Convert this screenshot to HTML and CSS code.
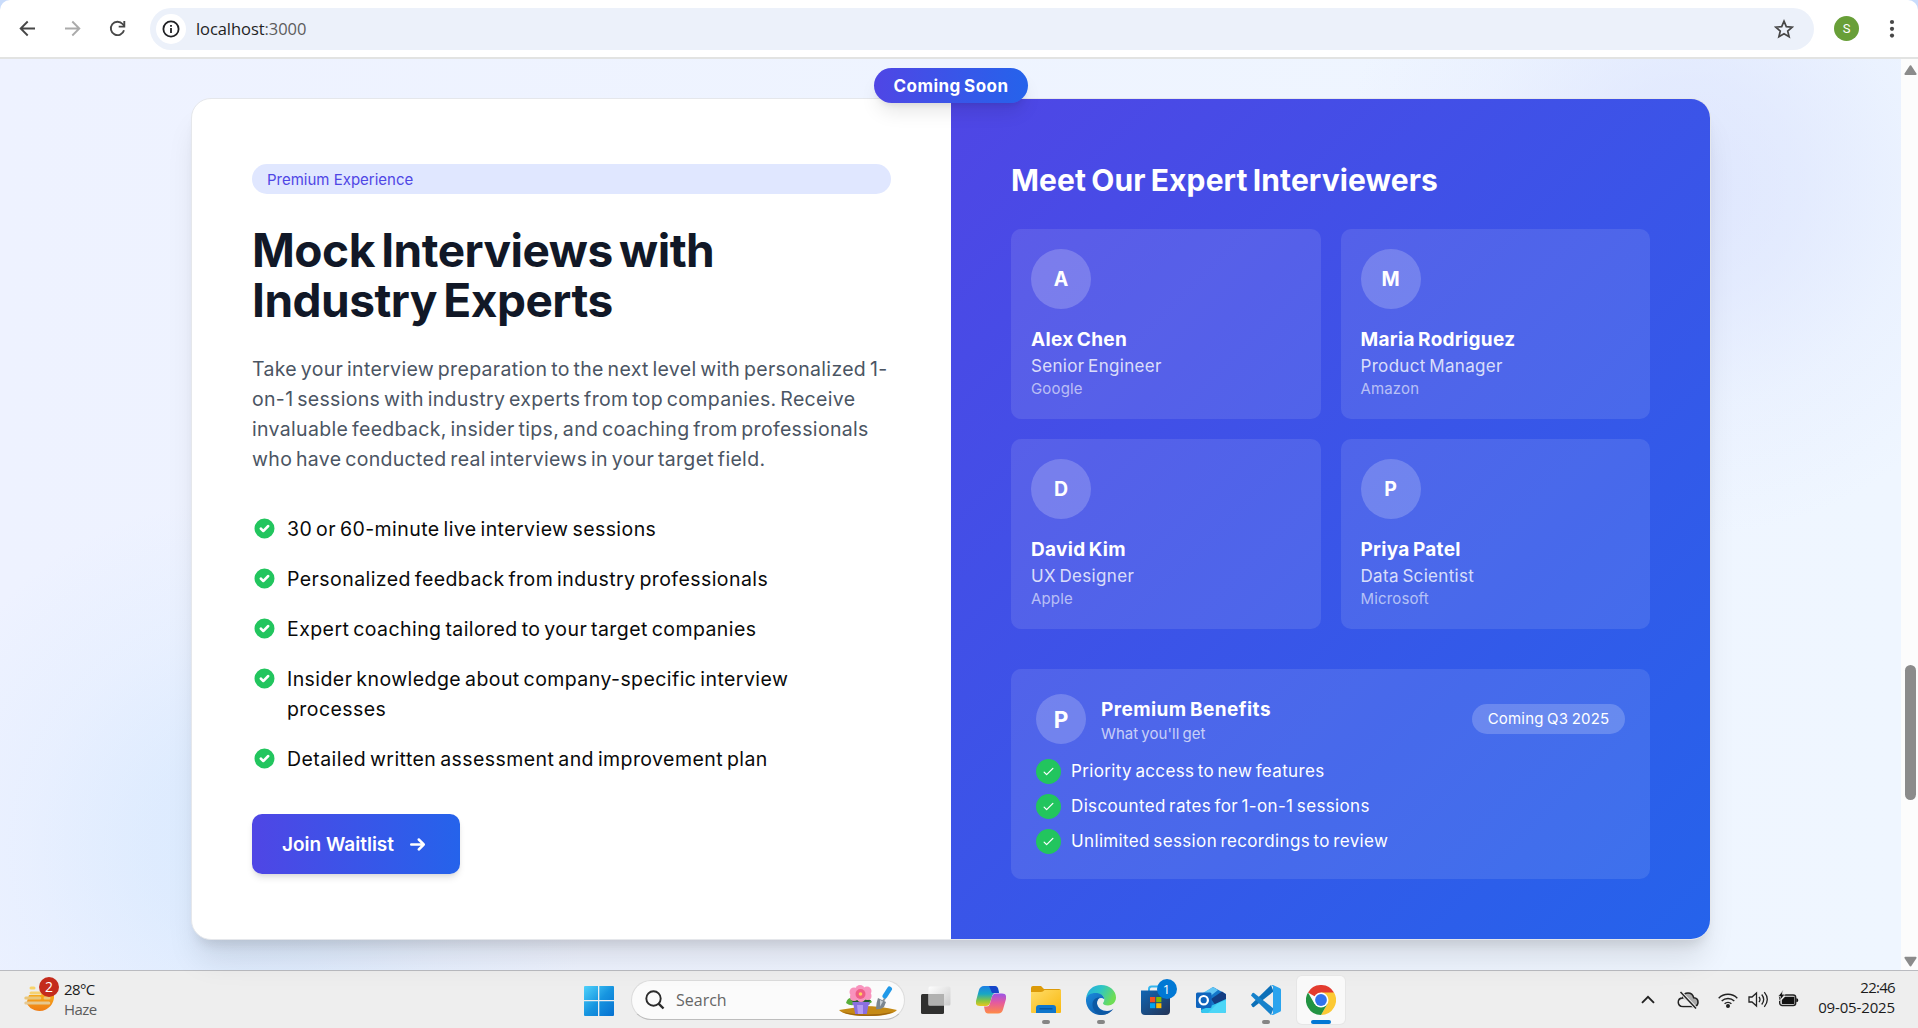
FILE: index.html
```html
<!DOCTYPE html>
<html lang="en">
<head>
<meta charset="utf-8">
<title>Mock Interviews with Industry Experts</title>
<link rel="stylesheet" href="styles.css">
</head>
<body>
<svg class="defs" aria-hidden="true">
  <defs>
    <symbol id="check-solid" viewBox="0 0 20 20"><path fill-rule="evenodd" d="M10 18a8 8 0 100-16 8 8 0 000 16zm3.707-9.293a1 1 0 00-1.414-1.414L9 10.586 7.707 9.293a1 1 0 00-1.414 1.414l2 2a1 1 0 001.414 0l4-4z" clip-rule="evenodd"/></symbol>
    <symbol id="check" viewBox="0 0 24 24"><path d="M5 13l4 4L19 7" fill="none" stroke="currentColor" stroke-width="2" stroke-linecap="round" stroke-linejoin="round"/></symbol>
  </defs>
</svg>

<header class="toolbar">
  <div class="nav">
    <svg width="17" height="17" viewBox="0 0 17 17" fill="none" stroke="#474747" stroke-width="1.9"><path d="M16 8.5H2M8.7 1.5l-7 7 7 7"/></svg>
    <svg width="17" height="17" viewBox="0 0 17 17" fill="none" stroke="#ababab" stroke-width="1.9"><path d="M1 8.5h14M8.3 1.5l7 7-7 7"/></svg>
    <svg width="17" height="17" viewBox="0 0 17 17" fill="none" stroke="#474747" stroke-width="1.9"><path d="M15 10.2A6.7 6.7 0 1 1 13.6 4l1.6 1.8"/><path d="M15.3 1v5.6H9.7"/></svg>
  </div>
  <div class="omnibox">
    <span class="site-info"><svg width="18" height="18" viewBox="0 0 18 18" fill="none" stroke="#202124" stroke-width="1.8"><circle cx="9" cy="9" r="7.6"/><path d="M9 8v5M9 4.9v1.9"/></svg></span>
    <span class="url">localhost<span class="port">:3000</span></span>
    <svg class="star" width="20" height="20" viewBox="0 0 20 20" fill="none" stroke="#474747" stroke-width="1.7"><path d="M10 2.2l2.3 5.4 5.9.5-4.5 3.9 1.4 5.7-5.1-3-5.1 3 1.4-5.7L1.8 8.1l5.9-.5z"/></svg>
  </div>
  <span class="profile">S</span>
  <svg class="dots" width="6" height="20" viewBox="0 0 6 20" fill="#474747"><circle cx="3" cy="3" r="2.1"/><circle cx="3" cy="9.8" r="2.1"/><circle cx="3" cy="16.6" r="2.1"/></svg>
</header>

<div class="viewport">
  <main class="page">
    <div class="card">
      <span class="soon">Coming Soon</span>
      <section class="pitch">
        <span class="tag">Premium Experience</span>
        <h1>Mock Interviews with<br>Industry Experts</h1>
        <p class="lead">Take your interview preparation to the next level with personalized 1-<br>on-1 sessions with industry experts from top companies. Receive<br>invaluable feedback, insider tips, and coaching from professionals<br>who have conducted real interviews in your target field.</p>
        <ul class="features">
          <li><svg><use href="#check-solid"/></svg><span>30 or 60-minute live interview sessions</span></li>
          <li><svg><use href="#check-solid"/></svg><span>Personalized feedback from industry professionals</span></li>
          <li><svg><use href="#check-solid"/></svg><span>Expert coaching tailored to your target companies</span></li>
          <li><svg><use href="#check-solid"/></svg><span>Insider knowledge about company-specific interview<br>processes</span></li>
          <li><svg><use href="#check-solid"/></svg><span>Detailed written assessment and improvement plan</span></li>
        </ul>
        <a class="button">Join Waitlist <svg viewBox="0 0 20 20"><path fill="currentColor" d="M10.293 5.293a1 1 0 011.414 0l4 4a1 1 0 010 1.414l-4 4a1 1 0 01-1.414-1.414L12.586 11H5a1 1 0 110-2h7.586l-2.293-2.293a1 1 0 010-1.414z"/></svg></a>
      </section>
      <section class="experts">
        <h2>Meet Our Expert Interviewers</h2>
        <div class="people">
          <article><b class="avatar">A</b><h3>Alex Chen</h3><p class="role">Senior Engineer</p><p class="org">Google</p></article>
          <article><b class="avatar">M</b><h3>Maria Rodriguez</h3><p class="role">Product Manager</p><p class="org">Amazon</p></article>
          <article><b class="avatar">D</b><h3>David Kim</h3><p class="role">UX Designer</p><p class="org">Apple</p></article>
          <article><b class="avatar">P</b><h3>Priya Patel</h3><p class="role">Data Scientist</p><p class="org">Microsoft</p></article>
        </div>
        <div class="benefits">
          <div class="benefits-head">
            <b class="avatar small">P</b>
            <div class="benefits-title"><h3>Premium Benefits</h3><p>What you'll get</p></div>
            <span class="quarter">Coming Q3 2025</span>
          </div>
          <ul>
            <li><i><svg><use href="#check"/></svg></i>Priority access to new features</li>
            <li><i><svg><use href="#check"/></svg></i>Discounted rates for 1-on-1 sessions</li>
            <li><i><svg><use href="#check"/></svg></i>Unlimited session recordings to review</li>
          </ul>
        </div>
      </section>
    </div>
  </main>
  <div class="scrollbar">
    <svg width="13" height="11" viewBox="0 0 13 11"><path d="M6.5 1.2L11.6 9H1.4z" fill="#8b8b8b" stroke="#8b8b8b" stroke-width="2" stroke-linejoin="round"/></svg>
    <span class="thumb"></span>
    <svg width="13" height="11" viewBox="0 0 13 11"><path d="M6.5 9.4L11.6 1.8H1.4z" fill="#8b8b8b" stroke="#8b8b8b" stroke-width="2" stroke-linejoin="round"/></svg>
  </div>
</div>

<footer class="taskbar">
  <div class="weather">
    <span class="haze">
      <svg width="30" height="30" viewBox="0 0 30 30"><defs><linearGradient id="sun" x2="0" y2="1"><stop stop-color="#f9b71c"/><stop offset="1" stop-color="#ef7d16"/></linearGradient></defs><path d="M17 7h11.500A13.300 13.300 0 012.500 20L5 12h12z" fill="url(#sun)"/><g stroke-linecap="round" stroke-width="3"><path d="M7 5h3" stroke="#f7d36a"/><path d="M7 10h15" stroke="#f5d272"/><path d="M1.800 15h14M21 15h4" stroke="#e9c679"/><path d="M1.800 20h23" stroke="#e6c890"/></g></svg>
      <span class="count">2</span>
    </span>
    <span class="temp">28°C<small>Haze</small></span>
  </div>

  <svg class="start" width="30" height="30" viewBox="0 0 30 30"><defs><linearGradient id="win" x2="1" y2="1"><stop stop-color="#4fd2fb"/><stop offset=".5" stop-color="#1795e0"/><stop offset="1" stop-color="#0570d0"/></linearGradient></defs><path fill="url(#win)" d="M1 0h13v14H0V1a1 1 0 011-1zM15.300 0H29a1 1 0 011 1v13H15.300zM0 15.300h14V30H1a1 1 0 01-1-1zM15.300 15.300H30V29a1 1 0 01-1 1H15.300z"/></svg>

  <div class="search">
    <svg width="20" height="20" viewBox="0 0 20 20" fill="none" stroke="#2b2b2b"><circle cx="8.500" cy="8.500" r="7.200" stroke-width="1.900"/><path d="M13.600 13.600l4.900 4.900" stroke-width="2.400"/></svg>
    <span>Search</span>
    <svg class="garden" width="58" height="32" viewBox="0 0 58 32">
      <path d="M0 25q14-2 25-4 16 0 33 4-6 6-29 6T0 25z" fill="#c58a16"/><path d="M3 27q25 5 51 0-8 4-25 4T3 27z" fill="#9d6410"/>
      <path d="M7 18q2-7 8-4l3 5q-6 3-11-1zM33 17q-3-5-7-3l-3 5q6 2 10-2z" fill="#59ae3b"/><path d="M12 15h20l-3 3H15z" fill="#245b2c"/>
      <g fill="#f893bd"><circle cx="21" cy="4.500" r="4.500"/><circle cx="28" cy="6" r="4.500"/><circle cx="15" cy="7" r="4.500"/><circle cx="28.500" cy="11" r="4"/><circle cx="15" cy="12" r="4"/><circle cx="22" cy="13" r="4"/></g><circle cx="21.500" cy="9" r="5" fill="#ef5d86"/><circle cx="21.500" cy="9" r="1.800" fill="#ffd35a"/>
      <path d="M13.500 17h17v3h-1l-1.700 9h-11.600l-1.700-9h-1z" fill="#8a6fe0"/><path d="M18 20h6v9h-5z" fill="#b49bf3"/>
      <path d="M46 13l-3 5" stroke="#8e979f" stroke-width="2"/><path d="M39 13l8 4-2 5q-4 3-8 2 0-6 2-11z" fill="#7c8790"/><path d="M41 15l3 1.500-3 5z" fill="#c8d0d6"/>
      <path d="M50.500 4L46 11" stroke="#2099e8" stroke-width="5" stroke-linecap="round"/>
    </svg>
  </div>

  <nav class="apps">
    <span class="app"><svg width="30" height="28" viewBox="0 0 30 28"><defs><linearGradient id="tv" x2="1" y2="1"><stop stop-color="#fff"/><stop offset="1" stop-color="#c9c9c9"/></linearGradient></defs><rect y="8" width="23" height="20" rx="1.500" fill="#30302f"/><rect x="7.500" y=".5" width="22" height="19" rx="1.500" fill="url(#tv)" opacity=".9"/><path d="M7.500 8H23v11.500H7.500z" fill="#b1b1b0"/></svg></span>
    <span class="app"><svg width="30" height="28" viewBox="0 0 30 28"><defs><linearGradient id="cp1" x2="0" y2="1"><stop stop-color="#1d7fe6"/><stop offset=".4" stop-color="#18a7c4"/><stop offset=".75" stop-color="#8cc63f"/><stop offset="1" stop-color="#e9c520"/></linearGradient><linearGradient id="cp2" x2="0" y2="1"><stop stop-color="#9a55e8"/><stop offset=".45" stop-color="#e45a9f"/><stop offset="1" stop-color="#ff8b45"/></linearGradient></defs><path d="M8 0h11q2.300 0 3 2.500L23 7h-4q-2 0-2.700 2.500L14 17q-1 3-4 3H4q-5 0-4-5L2.800 4.500Q4 0 8 0z" fill="url(#cp1)"/><path d="M13 0h6q2.300 0 3 2.500L23 7h-7z" fill="#1645c9"/><path d="M22 27.500H12q-2.500 0-3.200-3L8 20.500h3q2 0 2.800-2.500L16 10.500q1-3 4-3h6q5 0 4 5.500l-3 10.500q-1 4-5 4z" fill="url(#cp2)"/></svg></span>
    <span class="app running"><svg width="30" height="28" viewBox="0 0 30 28"><defs><linearGradient id="fold" x2="1" y2="1"><stop stop-color="#ffdc68"/><stop offset="1" stop-color="#f9b80e"/></linearGradient></defs><path d="M0 2q0-2 2-2h8l3 3h15q2 0 2 2v6H0z" fill="#dc9a08"/><path d="M0 6h10q2 0 3.500-2H30v22q0 1-1 1H1q-1 0-1-1z" fill="url(#fold)"/><path d="M5 27v-5q0-3 3-3h14q3 0 3 3v5z" fill="#0f76cc"/><path d="M8.500 22.800h13" stroke="#07549e" stroke-width="1.400"/></svg></span>
    <span class="app running"><svg width="30" height="30" viewBox="0 0 30 30"><defs><linearGradient id="eg1" x2="1" y2=".4"><stop stop-color="#24aae3"/><stop offset=".5" stop-color="#2ec5c5"/><stop offset="1" stop-color="#6edd55"/></linearGradient><linearGradient id="eg2" x2="1" y2="1"><stop stop-color="#1a8bdd"/><stop offset="1" stop-color="#0b4c9c"/></linearGradient></defs><path d="M0 14C1 5 7 0 15 0c9 0 15 6 15 12.500 0 5-4 8-8 8-3.500 0-5-1.300-5-2.300 0-.9 1.300-1.600 1.300-3.800C18.300 11 15 9 11 9 5 9 1 11 0 14z" fill="url(#eg1)"/><path d="M0 14c1-4 5-6 9.500-6 4.700 0 8.800 2.600 8.800 6.300-4-3-8 .2-7.300 4.200.6 4.500 5 7.500 10 7.500 3 0 5-1.300 6.500-2.200C25 27.500 20.500 30 15 30 6 30-.6 22.500 0 14z" fill="url(#eg2)"/><path d="M11 18.500c0 6 7 11 14 7.500-3 3-7 4-10 4-5-1-9-6-8.500-11.500C7 14 11 12 14 12.600c-2 1-3 3.400-3 5.900z" fill="#0c59a4"/></svg></span>
    <span class="app"><svg width="29" height="30" viewBox="0 0 29 30"><defs><linearGradient id="st" x2="1" y2="1"><stop stop-color="#0f66b5"/><stop offset="1" stop-color="#243456"/></linearGradient></defs><path d="M8 7V4q0-2.500 2.500-2.500h8Q21 1.500 21 4v3" fill="none" stroke="#35b6ef" stroke-width="2"/><path d="M0 5.500h29V26q0 4-4 4H4q-4 0-4-4z" fill="url(#st)"/><path d="M9 12h5.200v5.200H9z" fill="#f25022"/><path d="M15.200 12h5.200v5.200h-5.200z" fill="#7fba00"/><path d="M9 18.200h5.200v5H9z" fill="#00a4ef"/><path d="M15.200 18.200h5.200v5h-5.200z" fill="#ffb900"/></svg><span class="badge">1</span></span>
    <span class="app"><svg width="30" height="26" viewBox="0 0 30 26"><path d="M5 8L17 0l13 7v17q0 2-2 2H7q-2 0-2-2z" fill="#1477c9"/><path d="M5 7L17 0l5 3-10 8z" fill="#62c6f4"/><path d="M15 12l11-7.500 4 3V13l-10 6z" fill="#133d82"/><path d="M5 23l12-5 13-6v12q0 2-2 2H7q-2 0-2-2z" fill="#35c8f0"/><path d="M12 26l9-9 9-4v11q0 2-2 2z" fill="#4cd6f7"/><rect y="5.500" width="15.500" height="15.500" rx="1.500" fill="#0f64bd"/><circle cx="7.700" cy="13.200" r="4.200" fill="none" stroke="#fff" stroke-width="2.200"/></svg></span>
    <span class="app running"><svg width="30" height="30" viewBox="0 0 30 30"><path d="M0 19.500L20 0l2.500 6.500L3 22q-1 .5-1.700-.2z" fill="#0b6fb8"/><path d="M0 10.500l1.300-2.300Q2 7.500 3 8l19.500 15.500L20 30z" fill="#1581cb"/><path d="M22 0l7 3.200q1 .5 1 1.600v20.400q0 1.100-1 1.600L22 30q-1.200.3-2-.6 2 .4 2-2V2.600q0-2.400-2-2Q21-.3 22 0z" fill="#2aa4ee"/></svg></span>
    <span class="app active"><svg width="30" height="30" viewBox="0 0 30 30"><path d="M15 15L2 7.500A15 15 0 0128 7.500z" fill="#e33b2e"/><path d="M15 15V7.500h13A15 15 0 0115 30l6.500-11.300z" fill="#fcc934"/><path d="M15 15l6.500 3.700L15 30A15 15 0 012 7.500l6.500 11.200z" fill="#229342"/><circle cx="15" cy="15" r="7.500" fill="#fff"/><circle cx="15" cy="15" r="5.900" fill="#3273ec"/></svg></span>
  </nav>

  <div class="tray">
    <svg class="chevron" width="14" height="9" viewBox="0 0 14 9" fill="none" stroke="#222" stroke-width="1.900"><path d="M1 7.800l6-6 6 6"/></svg>
    <svg class="cloud" width="22" height="18" viewBox="0 0 22 18"><path d="M6 15.500q-4.700 0-4.700-4.200T5.500 7q1-5 5.500-5t5.700 4.800q4.300.3 4.300 4.400t-4.500 4.300z" fill="#aaa" stroke="#222" stroke-width="1.600"/><path d="M2 10q4-4 8 0l5 4.700H6q-4 0-4-4.700z" fill="#eee"/><path d="M3.500 1L19 17.500" stroke="#eee" stroke-width="3.400"/><path d="M3.500 1L19 17.500" stroke="#222" stroke-width="1.500"/></svg>
    <svg class="wifi" width="20" height="16" viewBox="0 0 20 16" fill="none" stroke="#222" stroke-width="1.400"><path d="M.7 6.200a13 13 0 0118.600 0M3.700 9a9 9 0 0112.600 0M6.600 11.800a5 5 0 016.800 0"/><circle cx="10" cy="14" r="1.300" fill="#222"/></svg>
    <svg class="sound" width="20" height="17" viewBox="0 0 20 17" fill="none" stroke="#222" stroke-width="1.300"><path d="M1 6v5h3l4.500 4V2L4 6z"/><path d="M11 5.800q2 2.700 0 5.400M13.700 3.500q4 5 0 10M16.300 1.200q6 7.300 0 14.600"/></svg>
    <svg class="battery" width="21" height="17" viewBox="0 0 21 17"><rect x="1.700" y="5" width="16" height="10.500" rx="2.500" fill="none" stroke="#222" stroke-width="1.400"/><path d="M3.800 13.700V10L7 6.800h9q.5 0 .5.500v6q0 .7-.7.700H4.500zM18.300 8.300q2 0 2 1.900t-2 1.900z" fill="#111"/><path d="M5.200 0L0 6.500h2.500L1.500 11 7 4.300H4.200z" fill="#111" stroke="#eee" stroke-width=".7"/></svg>
    <span class="clock">22:46<br><span class="date">09-05-2025</span></span>
  </div>
</footer>
</body>
</html>
```
FILE: styles.css
```css
* { box-sizing: border-box; }

body {
  margin: 0;
  width: 1918px;
  height: 1028px;
  overflow: hidden;
  display: flex;
  flex-direction: column;
  background: #c9dcfb;
  font-family: Inter, "Liberation Sans", sans-serif;
}

h1, h2, h3, p, ul { margin: 0; padding: 0; }
ul { list-style: none; }
svg { display: block; flex: none; }
.defs { display: none; }

/* Browser toolbar */
.toolbar {
  flex: none;
  display: flex;
  align-items: flex-start;
  height: 59px;
  padding: 8px 23px 0 19px;
  background: #fff;
  border-bottom: 2px solid #e2e3e2;
  border-radius: 10px 10px 0 0;
}
.nav { display: flex; gap: 28px; width: 131px; margin-top: 12px; }
.omnibox {
  display: flex;
  align-items: center;
  width: 1665px;
  height: 42px;
  padding: 0 20px 0 6px;
  border-radius: 21px;
  background: #ecf1fa;
}
.site-info {
  display: flex;
  align-items: center;
  justify-content: center;
  width: 30px;
  height: 30px;
  border-radius: 50%;
  background: #fff;
}
.url {
  margin-left: 10px;
  font: 16.5px/22px "Open Sans", "Noto Sans", sans-serif;
  letter-spacing: -.06px;
  color: #1f1f1f;
}
.port { color: #5c5c5c; }
.star { margin-left: auto; }
.profile {
  width: 25px;
  height: 25px;
  margin: 8px 0 0 20px;
  border-radius: 50%;
  background: #689f38;
  color: #fff;
  font: 13px/25px Roboto, sans-serif;
  text-align: center;
}
.dots { margin: 11px 0 0 30px; }

/* Page area */
.viewport { display: flex; height: 911px; flex: none; }
.page {
  width: 1901px;
  padding: 39px 0 0 191px;
  background:
    radial-gradient(circle at 250px 788px, rgba(191, 222, 253, .44) 0, rgba(191, 222, 253, .32) 110px, rgba(191, 222, 253, .13) 220px, transparent 350px),
    radial-gradient(circle at 1690px 128px, rgba(205, 214, 252, .48) 0, rgba(205, 214, 252, .34) 110px, rgba(205, 214, 252, .13) 220px, transparent 350px),
    linear-gradient(90deg, #eef2ff, #eff6ff);
}
.scrollbar {
  width: 17px;
  display: flex;
  flex-direction: column;
  align-items: center;
  padding: 6px 0 3px 2px;
  background: #fcfcfc;
}
.thumb { width: 11px; height: 135px; margin: 589px 0 auto; border-radius: 6px; background: #8b8b8b; }

.card {
  position: relative;
  display: grid;
  grid-template-columns: 1fr 1fr;
  width: 1520px;
  height: 842px;
  border: 1px solid #e5e7eb;
  border-radius: 20px;
  background: #fff;
  box-shadow: 0 25px 31px -6px rgba(0, 0, 0, .1), 0 10px 12px -6px rgba(0, 0, 0, .1);
}
.soon {
  position: absolute;
  top: -31px;
  left: 682px;
  width: 154px;
  height: 35px;
  border-radius: 18px;
  background: linear-gradient(90deg, #4f46e5, #2563eb);
  box-shadow: 0 12px 19px -4px rgba(0, 0, 0, .1), 0 5px 7px -4px rgba(0, 0, 0, .1);
  color: #fff;
  font-size: 17px;
  font-weight: 700;
  line-height: 36px;
  letter-spacing: .44px;
  word-spacing: -1px;
  text-align: center;
}

.pitch { padding: 65px 60px 0; }
.tag {
  display: block;
  height: 30px;
  padding: 0 15px;
  border-radius: 15px;
  background: #e0e7ff;
  color: #4f46e5;
  font-size: 15px;
  font-weight: 420;
  line-height: 31px;
}
h1 {
  margin-top: 31px;
  font-size: 46px;
  font-weight: 700;
  line-height: 50px;
  letter-spacing: -.5px;
  word-spacing: -4px;
  color: #111827;
}
.lead {
  margin-top: 29px;
  font-size: 19.5px;
  line-height: 30px;
  letter-spacing: .32px;
  word-spacing: -2px;
  color: #4b5563;
  white-space: nowrap;
  font-weight: 380;
}
.features {
  display: grid;
  gap: 20px;
  margin-top: 40px;
  color: #0a0a0a;
  font-size: 19.5px;
  line-height: 30px;
  letter-spacing: .43px;
  word-spacing: -2px;
  font-weight: 380;
}
.features li { display: flex; gap: 10px; }
.features svg { width: 25px; height: 25px; margin-top: 2px; fill: #22c55e; }
.button {
  display: flex;
  align-items: center;
  width: 208px;
  height: 60px;
  margin-top: 40px;
  padding: 0 30px;
  border-radius: 10px;
  background: linear-gradient(90deg, #4f46e5, #2563eb);
  box-shadow: 0 5px 7px -1px rgba(0, 0, 0, .1), 0 2px 5px -2px rgba(0, 0, 0, .1);
  color: #fff;
  font-size: 19px;
  font-weight: 600;
}
.button svg { width: 25px; height: 25px; margin-left: 11px; }

.experts {
  padding: 61px 60px 0;
  border-radius: 0 19px 19px 0;
  background: linear-gradient(135deg, #4f46e5, #2563eb);
  color: #fff;
}
h2 { font-size: 30px; font-weight: 700; line-height: 40px; letter-spacing: .1px; word-spacing: -2px; }
.people { display: grid; grid-template-columns: 1fr 1fr; gap: 20px; margin-top: 29px; }
.people article { height: 190px; padding: 20px; border-radius: 10px; background: rgba(255, 255, 255, .1); }
.avatar {
  display: flex;
  align-items: center;
  justify-content: center;
  width: 60px;
  height: 60px;
  border-radius: 50%;
  background: rgba(255, 255, 255, .2);
  font-size: 19.5px;
  font-weight: 700;
}
.avatar.small { width: 50px; height: 50px; font-size: 22.5px; }
h3 { font-size: 19px; font-weight: 700; line-height: 30px; letter-spacing: .3px; word-spacing: -1.5px; padding-top: 1px; height: 30px; }
.people h3 { margin-top: 15px; }
.role { font-size: 17px; line-height: 25px; letter-spacing: .32px; word-spacing: -1.5px; color: rgba(255, 255, 255, .8); }
.org { font-size: 15px; line-height: 20px; letter-spacing: .15px; color: rgba(255, 255, 255, .6); }

.benefits { height: 210px; margin-top: 40px; padding: 25px; border-radius: 10px; background: rgba(255, 255, 255, .1); }
.benefits-head { display: flex; align-items: center; }
.benefits-title { margin: 0 auto 0 15px; }
.benefits h3 { letter-spacing: .44px; }
.benefits-title p { font-size: 15px; line-height: 20px; letter-spacing: .1px; word-spacing: -1.5px; color: rgba(255, 255, 255, .7); }
.quarter {
  width: 153px;
  height: 30px;
  border-radius: 15px;
  background: rgba(255, 255, 255, .2);
  font-size: 15px;
  font-weight: 420;
  line-height: 30px;
  letter-spacing: .2px;
  word-spacing: -1px;
  text-align: center;
}
.benefits ul { display: grid; gap: 10px; margin-top: 15px; font-size: 17px; line-height: 25px; letter-spacing: .36px; word-spacing: -1.7px; }
.benefits li { display: flex; gap: 10px; }
.benefits i {
  display: flex;
  align-items: center;
  justify-content: center;
  width: 25px;
  height: 25px;
  border-radius: 50%;
  background: #22c55e;
}
.benefits i svg { width: 15px; height: 15px; }

/* Taskbar */
.taskbar {
  flex: none;
  display: flex;
  height: 58px;
  padding-left: 24px;
  border-top: 1px solid #babbc0;
  background: #eee;
  font: 15px/20px "Open Sans", "Noto Sans", sans-serif;
  color: #1b1b1b;
}
.weather { display: flex; width: 560px; }
.haze { position: relative; margin-top: 12px; }
.count {
  position: absolute;
  left: 15px;
  top: -6px;
  width: 20px;
  height: 20px;
  border-radius: 50%;
  background: #c42b1c;
  color: #fff;
  font-size: 14px;
  text-align: center;
}
.temp { margin: 8px 0 0 10px; letter-spacing: -.6px; }
.temp small { display: block; font-size: 15px; color: #5c5c5c; }
.start { margin-top: 15px; }
.search {
  display: flex;
  align-items: center;
  width: 274px;
  height: 40px;
  margin: 9px 3px 0 17px;
  padding-left: 13px;
  border: 1px solid #dcdcdc;
  border-bottom-color: #bdbdbd;
  border-radius: 20px;
  background: #fbfbfb;
  color: #666;
  font-size: 16px;
}
.search span { margin-left: 11px; }
.garden { margin: 1px 7px 0 auto; }
.apps { display: flex; }
.app {
  position: relative;
  display: flex;
  align-items: center;
  justify-content: center;
  width: 48px;
  height: 48px;
  margin: 5px 3.5px 0;
  border-radius: 5px;
}
.app.active { background: #f9f9f9; box-shadow: 0 0 0 1px #e6e6e6; }
.running::after, .active::after {
  content: "";
  position: absolute;
  bottom: 0;
  width: 8px;
  height: 4px;
  border-radius: 2px;
  background: #858585;
}
.active::after { width: 20px; background: #0078d4; }
.badge {
  position: absolute;
  left: 25px;
  top: 3px;
  width: 20px;
  height: 20px;
  border-radius: 50%;
  background: #0078d4;
  color: #fff;
  font-size: 13px;
  text-align: center;
}
.tray { display: flex; align-items: center; margin-left: auto; padding-right: 23px; }
.cloud { margin-left: 22px; }
.wifi { margin-left: 19px; }
.sound { margin-left: 10px; }
.battery { margin: -3px 0 0 10px; }
.clock { width: 96px; margin-top: -6px; text-align: right; letter-spacing: -.7px; }
.date { letter-spacing: -.14px; }
```
